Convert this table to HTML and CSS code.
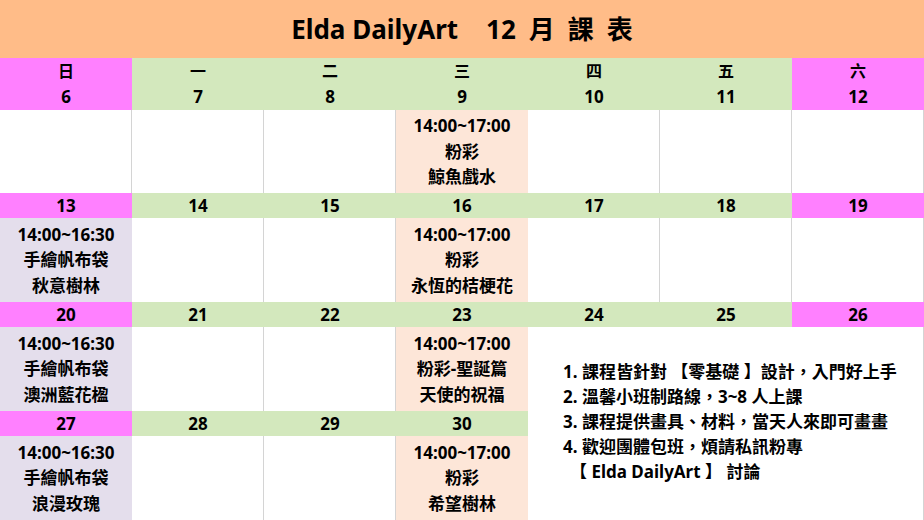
FILE: index.html
```html
<!DOCTYPE html>
<html lang="zh-Hant">
<head>
<meta charset="utf-8">
<title>Elda DailyArt 12 月 課表</title>
<link rel="stylesheet" href="styles.css">
</head>
<body>
<div class="page">
  <header class="title">
    <span>Elda DailyArt</span><span class="t-num">12</span><span class="t-cjk">月</span><span class="t-cjk">課</span><span class="t-cjk">表</span>
  </header>
  <div class="cal">
    <div class="hd sun"><span>日</span><span>6</span></div>
    <div class="hd wk"><span>一</span><span>7</span></div>
    <div class="hd wk"><span>二</span><span>8</span></div>
    <div class="hd wk"><span>三</span><span>9</span></div>
    <div class="hd wk"><span>四</span><span>10</span></div>
    <div class="hd wk"><span>五</span><span>11</span></div>
    <div class="hd sun"><span>六</span><span>12</span></div>

    <div class="cell"></div>
    <div class="cell"></div>
    <div class="cell"></div>
    <div class="cell peach"><span>14:00~17:00</span><span>粉彩</span><span>鯨魚戲水</span></div>
    <div class="cell"></div>
    <div class="cell"></div>
    <div class="cell"></div>

    <div class="dt sun">13</div>
    <div class="dt wk">14</div>
    <div class="dt wk">15</div>
    <div class="dt wk">16</div>
    <div class="dt wk">17</div>
    <div class="dt wk">18</div>
    <div class="dt sun">19</div>

    <div class="cell lav"><span>14:00~16:30</span><span>手繪帆布袋</span><span>秋意樹林</span></div>
    <div class="cell"></div>
    <div class="cell"></div>
    <div class="cell peach"><span>14:00~17:00</span><span>粉彩</span><span>永恆的桔梗花</span></div>
    <div class="cell"></div>
    <div class="cell"></div>
    <div class="cell"></div>

    <div class="dt sun">20</div>
    <div class="dt wk">21</div>
    <div class="dt wk">22</div>
    <div class="dt wk">23</div>
    <div class="dt wk">24</div>
    <div class="dt wk">25</div>
    <div class="dt sun">26</div>

    <div class="cell lav"><span>14:00~16:30</span><span>手繪帆布袋</span><span>澳洲藍花楹</span></div>
    <div class="cell"></div>
    <div class="cell"></div>
    <div class="cell peach"><span>14:00~17:00</span><span>粉彩-聖誕篇</span><span>天使的祝福</span></div>
    <div class="notes">
      <p>1. 課程皆針對 【零基礎 】設計，入門好上手</p>
      <p>2. 溫馨小班制路線，3~8 人上課</p>
      <p>3. 課程提供畫具、材料，當天人來即可畫畫</p>
      <p>4. 歡迎團體包班，煩請私訊粉專</p>
      <p class="indent">【 Elda DailyArt 】 討論</p>
    </div>

    <div class="dt sun">27</div>
    <div class="dt wk">28</div>
    <div class="dt wk">29</div>
    <div class="dt wk">30</div>

    <div class="cell lav"><span>14:00~16:30</span><span>手繪帆布袋</span><span>浪漫玫瑰</span></div>
    <div class="cell"></div>
    <div class="cell"></div>
    <div class="cell peach"><span>14:00~17:00</span><span>粉彩</span><span>希望樹林</span></div>
  </div>
</div>
</body>
</html>
```

FILE: styles.css
```css
* { box-sizing: border-box; margin: 0; padding: 0; }

html, body {
  width: 924px;
  height: 520px;
  background: #ffffff;
  overflow: hidden;
}

body {
  font-family: "Noto Sans", "Noto Sans CJK TC", sans-serif;
  font-weight: 700;
  color: #000;
}

.page {
  display: flex;
  flex-direction: column;
  width: 924px;
  height: 520px;
}

.title {
  height: 58px;
  background: #ffbc88;
  display: flex;
  align-items: center;
  justify-content: center;
  font-size: 26px;
  line-height: 1;
}

.t-num { margin-left: 28px; }
.t-cjk { margin-left: 13px; }

.cal {
  display: grid;
  grid-template-columns: repeat(7, 132px);
  grid-template-rows: 52px 83px 25px 84px 25px 84px 25px 84px;
  font-size: 17px;
}

.hd {
  display: flex;
  flex-direction: column;
  align-items: center;
  justify-content: center;
  line-height: 26px;
}
.hd span:first-child { font-size: 16px; }

.sun { background: #ff80ff; }
.wk { background: #d3e8bd; }

.dt {
  display: flex;
  align-items: center;
  justify-content: center;
  line-height: 25px;
}

.cell {
  display: flex;
  flex-direction: column;
  align-items: center;
  justify-content: center;
  line-height: 25.5px;
  border-right: 1px solid #d4d4d4;
}

.peach { background: #fde6d8; border-right: none; }
.lav { background: #e4deec; border-right: none; }

.notes {
  grid-column: 5 / span 3;
  grid-row: 6 / span 3;
  border-right: 1px solid #d4d4d4;
  padding: 32px 0 0 35px;
  font-size: 17px;
  line-height: 25px;
  white-space: nowrap;
}

.notes .indent { padding-left: 7px; }
```
